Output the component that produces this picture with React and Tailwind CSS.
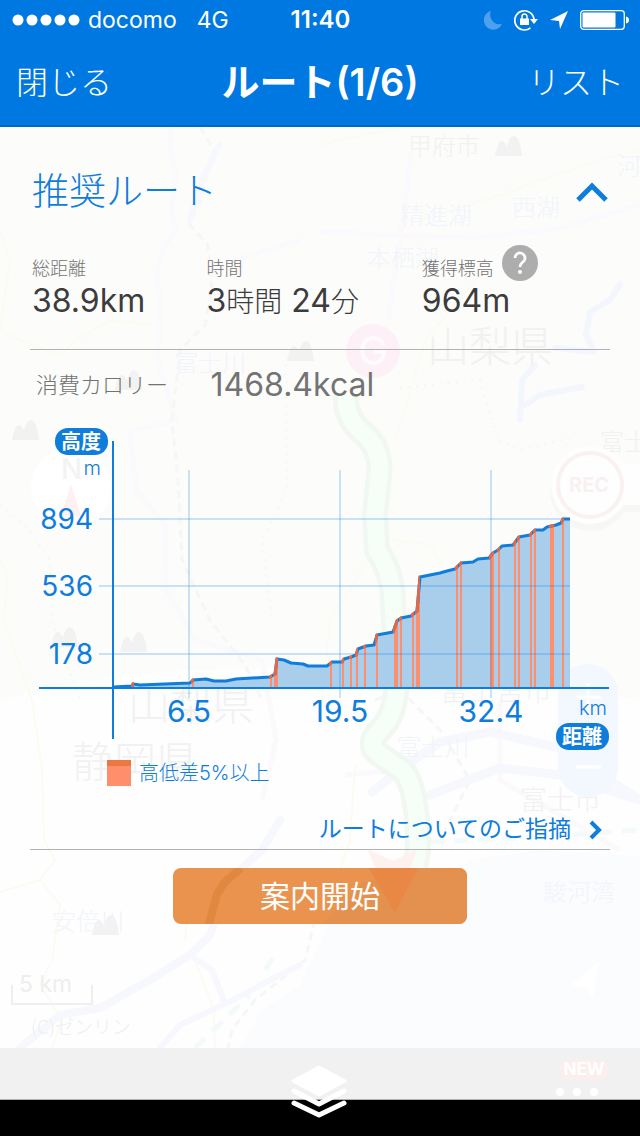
import React from "react";

// Elevation profile, [x, height] measured from the crossing of the axes
const PROFILE = [
  [0, 1], [19, 2], [20, 4], [27, 3], [52, 4], [77, 5], [80, 8], [93, 9],
  [101, 7], [113, 7], [123, 9], [157, 11], [162, 14], [164, 29], [171, 28],
  [178, 25], [190, 24], [195, 22], [214, 22], [219, 26], [229, 26], [231, 29],
  [238, 31], [243, 33], [245, 39], [253, 42], [261, 43], [264, 53], [280, 56],
  [284, 67], [288, 70], [298, 72], [304, 77], [307, 111], [327, 115],
  [334, 117], [342, 119], [348, 125], [360, 126], [365, 129], [376, 130],
  [380, 135], [385, 138], [389, 142], [400, 143], [406, 151], [417, 153],
  [422, 158], [430, 158], [434, 161], [443, 163], [448, 165], [450, 169],
  [457, 169],
];

// Steep parts of the route, [start, width]
const STEEP = [
  [19, 2], [79, 2], [157, 2], [161, 4], [217, 2], [229, 2], [237, 2],
  [243, 2], [251, 2], [263, 2], [281, 4], [287, 2], [299, 2], [303, 4],
  [343, 2], [347, 2], [377, 4], [385, 2], [401, 2], [405, 2], [417, 2],
  [421, 2], [437, 4], [449, 2],
];

const Y_TICKS = [
  { label: "894", y: -169 },
  { label: "536", y: -102 },
  { label: "178", y: -34 },
];

const X_TICKS = [
  { label: "6.5", x: 76 },
  { label: "19.5", x: 227 },
  { label: "32.4", x: 378 },
];

const linePath = "M" + PROFILE.map(([x, h]) => `${x} ${-h}`).join("L");

// --- Map behind the panel ---

const Peak = ({ x, y }) => (
  <path
    transform={`translate(${x} ${y})`}
    d="M0 20C2 10 4 5 7 5C10 5 11 10 12 10C14 4 16 0 19 0C23 0 26 9 27 20Z"
    fill="#f2f2f2"
  />
);

const MapBackdrop = () => (
  <svg
    className="absolute inset-0 h-full w-full"
    viewBox="0 127 640 921"
    preserveAspectRatio="xMidYMin slice"
    fill="none"
    aria-hidden="true"
  >
    <path d="M0 127H640V1048H0Z" fill="#fcfcfb" />
    <path d="M0 700Q160 660 330 670T640 700V1048H0Z" fill="#fefefe" />
    <path
      d="M240 1048L262 1010L300 985L328 925L400 912L470 860L540 850L640 856V1048Z"
      fill="#fbfcfe"
    />

    {/* Roads */}
    <g stroke="#fcf9fc" strokeWidth="5">
      <path d="M172 127Q168 150 176 175Q168 210 176 230Q150 260 160 300L158 360L176 420L130 432L136 490L165 525L166 590L196 640L262 660L276 740L262 800" />
      <path d="M230 262L300 240M320 232L390 235L480 238L560 228L640 205M412 150L400 240L388 320" />
      <path d="M345 775L400 770M500 700L500 780L620 850" />
    </g>
    <g stroke="#fbfbf2" strokeWidth="2">
      <path d="M0 230L10 260L0 330L30 345L60 355L76 340L112 320L150 325M320 145L340 140L400 127M420 220L500 195L600 160L640 150" />
      <path d="M485 270L425 340L405 410L395 440M0 560L8 575L4 620L32 700L42 770L44 840L55 860L40 880L0 892M40 880L60 905L52 960L40 985L62 1020L52 1048" />
      <path d="M395 540L430 545L450 580M365 565L330 620L322 700M355 765L350 840L330 900M190 880L185 940M195 960L214 1010L215 1048" />
    </g>
    <g stroke="#f6f6f5" strokeWidth="3" strokeDasharray="8 5">
      <path d="M200 127L214 150L200 200L190 225L208 245L212 290L205 325L180 350L172 420L178 480L182 560L210 620L245 665L262 700" />
      <path d="M375 700L400 690L440 730L470 780L445 830" />
      <path d="M315 920L305 960L255 1000L232 1030L228 1048" />
    </g>
    <g stroke="#f6f6f5" strokeWidth="2" strokeDasharray="2 6">
      <path d="M286 365L287 490L262 540L272 620M0 505L25 525L50 560L52 620L80 700M400 388L480 380L498 440L520 450L570 438" />
    </g>

    {/* Rivers and expressways */}
    <g stroke="#f6f8fd" strokeLinecap="round" strokeLinejoin="round">
      <path d="M219 145L200 185L190 220" strokeWidth="6" />
      <path
        d="M620 284L610 300L590 312L586 335L594 352L555 348M520 420L522 380L535 365M525 405L540 395L582 387"
        stroke="#f3f6fc"
        strokeWidth="6"
      />
      <path d="M372 792L400 770L440 742L490 732L560 748L640 800M430 795L500 768L560 775L640 800" strokeWidth="9" />
      <path d="M280 820L262 850L240 870L220 905L210 935L190 955L150 980L100 1008L60 1015L20 1048" strokeWidth="8" />
      <path d="M190 955L212 970L225 1004L180 1025L160 1048M225 1004L280 975L300 965" strokeWidth="6" />
    </g>
    <g stroke="#f4faf9" strokeWidth="5" strokeDasharray="14 10">
      <path d="M195 1048L250 995M265 970L278 950M430 842L520 838L640 830" />
    </g>

    {/* Route */}
    <g strokeLinejoin="round">
      <path
        d="M346 395Q345 418 362 432Q382 448 379 475L375 515L377 550Q392 572 393 600L397 680Q396 715 380 730Q365 745 380 755L402 770Q418 785 418 850L412 885"
        stroke="#f1f7f1"
        strokeWidth="26"
      />
      <path
        d="M346 395Q345 418 362 432Q382 448 379 475L375 515L377 550Q392 572 393 600L397 680Q396 715 380 730Q365 745 380 755L402 770Q418 785 418 850L412 885"
        stroke="#f6fef8"
        strokeWidth="17"
      />
    </g>
    <path d="M367 849L393 861L417 849L396 912Z" fill="#fef2f1" />
    <circle cx="373" cy="351" r="27" fill="#fdf0f6" />

    <Peak x={495} y={136} />
    <Peak x={287} y={341} />
    <Peak x={115} y={370} />
    <Peak x={12} y={420} />
    <Peak x={51} y={627} />
    <Peak x={120} y={632} />
    <Peak x={92} y={915} />

    {/* Place names */}
    <g className="font-['Noto_Sans_CJK_JP',sans-serif] font-light" fontSize="24">
      <g fill="#f1f1f1">
        <text x="408" y="155">甲府市</text>
        <text x="427" y="362" fontSize="42">山梨県</text>
        <text x="600" y="451">富士宮</text>
        <text x="128" y="720" fontSize="42">山梨県</text>
        <text x="72" y="777" fontSize="42">静岡県</text>
        <text x="440" y="701" fontSize="28">富士宮市</text>
        <text x="520" y="810" fontSize="27">富士市</text>
      </g>
      <g fill="#f1f4fb">
        <text x="617" y="175">河口</text>
        <text x="400" y="224">精進湖</text>
        <text x="512" y="216">西湖</text>
        <text x="367" y="267">本栖湖</text>
        <text x="174" y="372">富士川</text>
        <text x="397" y="756">富士川</text>
        <text x="52" y="930">安倍川</text>
        <text x="543" y="901">駿河湾</text>
      </g>
      <text x="31" y="1034" fontSize="19" fill="#efefef">(C)ゼンリン</text>
    </g>

    {/* Map controls */}
    <circle cx="71" cy="487" r="40" fill="#fff" />
    <path d="M71 484L81 516H61Z" fill="#fff1f1" />
    <circle cx="590" cy="491" r="40" fill="#f7f7f6" />
    <path d="M600 464H640V512H600Z" fill="#f7f7f6" />
    <path d="M600 464H640V505H600Z" fill="#fefefe" />
    <circle cx="590" cy="485" r="39" fill="#fefefe" />
    <circle cx="590" cy="485" r="32" stroke="#faf1f1" strokeWidth="4" />
    <rect x="558" y="664" width="60" height="133" rx="30" fill="#f3f7fe" />
    <path d="M576 697H601M588 684V710M576 767H601" stroke="#fff" strokeWidth="3" />
    <path d="M571 985L599 962L593 998L586 988Z" fill="#fff" />
    <path d="M12 985V1004H92V985" stroke="#efefef" strokeWidth="2" />
    <g className="font-[Inter,sans-serif]">
      <text x="61" y="479" fontSize="28" fontWeight="500" fill="#f3f3f3">N</text>
      <text x="569" y="492" fontSize="20" fontWeight="700" fill="#f9f1f1">REC</text>
      <text x="358" y="365" fontSize="40" fontWeight="500" fill="#fffafc">G</text>
      <text x="19" y="992" fontSize="23" fill="#eeeeee">5 km</text>
    </g>
  </svg>
);

// --- Status bar and title ---

const StatusBar = () => (
  <div className="grid h-10 grid-cols-3 items-center pl-3 pr-[11px] text-[23px]">
    <div className="flex items-center gap-2 whitespace-nowrap">
      <svg
        className="shrink-0"
        width="68"
        height="12"
        viewBox="0 0 68 12"
        fill="currentColor"
        aria-hidden="true"
      >
        <circle cx="6" cy="6" r="5.5" />
        <circle cx="20" cy="6" r="5.5" />
        <circle cx="34" cy="6" r="5.5" />
        <circle cx="48" cy="6" r="5.5" />
        <circle cx="62" cy="6" r="5.5" />
      </svg>
      <span>docomo</span>
      <span className="ml-3">4G</span>
    </div>
    <div className="text-center text-[24px] font-semibold">11:40</div>
    <div className="flex items-center justify-end gap-3">
      <svg width="18" height="20" viewBox="0 0 18 20" fill="#4da1ee" aria-hidden="true">
        <path d="M7 1A9.500 9.500 0 1 0 18 14A9.500 9.500 0 0 1 7 1Z" />
      </svg>
      <svg width="24" height="22" viewBox="0 0 24 22" fill="none" aria-hidden="true">
        <path
          d="M16.500 18.800A9.600 9.600 0 1 1 20 11"
          stroke="currentColor"
          strokeWidth="1.700"
        />
        <path d="M16 10H24L20 15Z" fill="currentColor" />
        <path d="M6 9.500H15V16H6Z" fill="currentColor" />
        <path d="M8 10V7.500A2.500 2.500 0 0 1 13 7.500V10" stroke="currentColor" strokeWidth="1.500" />
      </svg>
      <svg width="18" height="20" viewBox="0 0 18 20" fill="currentColor" aria-hidden="true">
        <path d="M18 1L0 10L9 11L10 19Z" />
      </svg>
      <svg width="49" height="20" viewBox="0 0 49 20" fill="none" aria-hidden="true">
        <rect x="0.700" y="0.700" width="43.600" height="18.600" rx="3" stroke="currentColor" strokeWidth="1.300" />
        <rect x="2.500" y="2.500" width="33" height="15" rx="1" fill="currentColor" />
        <path d="M46 6.500Q49 7 49 10T46 13.500Z" fill="currentColor" />
      </svg>
    </div>
  </div>
);

const Stat = ({ label, children, extra }) => (
  <div>
    <dt className="flex h-9 items-end gap-2 text-[18px] leading-6 text-[#737373]">
      {label}
      {extra}
    </dt>
    <dd className="whitespace-nowrap text-[32px] leading-10 text-[#3c3c3e]">{children}</dd>
  </div>
);

// --- Elevation chart ---

const ElevationChart = () => (
  <svg
    className="block h-auto w-full"
    viewBox="-83 -268 580 370"
    fill="none"
    role="img"
    aria-label="高度と距離"
  >
    <defs>
      <clipPath id="area">
        <path d={`${linePath}V0H0Z`} />
      </clipPath>
      <clipPath id="steep">
        {STEEP.map(([x, w]) => (
          <rect key={x} x={x - 1} y="-200" width={w + 1} height="200" />
        ))}
      </clipPath>
    </defs>

    <path d={`${linePath}V0H0Z`} fill="#a9ceec" />
    <g clipPath="url(#area)" fill="#ff8f6c">
      {STEEP.map(([x, w]) => (
        <rect key={x} x={x} y="-200" width={w} height="200" />
      ))}
    </g>

    <g stroke="#0078dc" strokeOpacity="0.2" strokeWidth="2">
      {Y_TICKS.map((t) => (
        <path key={t.label} d={`M-14 ${t.y}H457`} />
      ))}
      {X_TICKS.map((t) => (
        <path key={t.label} d={`M${t.x} -218V10`} />
      ))}
    </g>

    <path d={linePath} stroke="#0f7ddc" strokeWidth="3" strokeLinejoin="round" />
    <path d={linePath} stroke="#e0694a" strokeWidth="3" clipPath="url(#steep)" />
    <path d="M-74 0H496M0 -247V51" stroke="#0f7ddc" strokeWidth="2" />

    <g fill="#0f7ddc" className="font-[Inter,sans-serif]">
      {Y_TICKS.map((t) => (
        <text key={t.label} x="-20" y={t.y + 10} fontSize="28" textAnchor="end">
          {t.label}
        </text>
      ))}
      {X_TICKS.map((t) => (
        <text key={t.label} x={t.x} y="34" fontSize="30" textAnchor="middle">
          {t.label}
        </text>
      ))}
      <g fontSize="20" fontWeight="300" textAnchor="end">
        <text x="-12" y="-213">m</text>
        <text x="494" y="27">km</text>
      </g>
    </g>

    <rect x="-58" y="-260" width="53" height="27" rx="13" fill="#0f7ddc" />
    <rect x="443" y="35" width="53" height="27" rx="13" fill="#0f7ddc" />
    <g
      className="font-['Noto_Sans_CJK_JP',sans-serif] font-bold"
      fill="#fff"
      fontSize="20"
      textAnchor="middle"
    >
      <text x="-32" y="-239">高度</text>
      <text x="469" y="56">距離</text>
    </g>

    <rect x="-6" y="72" width="24" height="26" fill="#ff8f6c" />
    <rect x="-6" y="72" width="24" height="6" fill="#ec7742" />
    <text
      x="26"
      y="92"
      fontSize="20"
      fill="#0f7ddc"
      className="font-[Inter,'Noto_Sans_CJK_JP',sans-serif] font-light"
    >
      高低差5%以上
    </text>
  </svg>
);

const HelpButton = () => (
  <button
    type="button"
    aria-label="獲得標高について"
    className="flex size-9 items-center justify-center rounded-full bg-[#adadad] text-white"
  >
    <svg width="16" height="24" viewBox="0 0 16 24" fill="none" aria-hidden="true">
      <path
        d="M3 7A5 5 0 1 1 12 10C10 12 8 12.500 8 16"
        stroke="currentColor"
        strokeWidth="2.700"
      />
      <circle cx="8" cy="21" r="2" fill="currentColor" />
    </svg>
  </button>
);

const TabBar = () => (
  <footer>
    <nav className="relative flex h-[52px] justify-end border-b border-[#b0b0b0] bg-[#f1f1f1] pr-8">
      <button
        type="button"
        aria-label="レイヤー"
        className="absolute left-1/2 top-[17px] -translate-x-1/2"
      >
        <svg width="58" height="54" viewBox="0 0 58 54" fill="none" aria-hidden="true">
          <g stroke="#fff" strokeLinejoin="round" strokeLinecap="round">
            <path d="M2 16L28 2L54 16L28 30Z" fill="#fff" strokeWidth="3" />
            <path d="M3 26L28 39L53 26" strokeWidth="5" />
            <path d="M3 38L28 50L53 38" strokeWidth="5" />
          </g>
        </svg>
      </button>
      <button type="button" aria-label="その他" className="flex w-[52px] flex-col gap-2 pt-3">
        <span className="flex h-5 w-12 items-center justify-center self-end rounded-lg bg-[#fdeeee] text-[17px] font-bold text-white">
          NEW
        </span>
        <span className="flex gap-[9px]">
          <span className="size-2 rounded-full bg-white" />
          <span className="size-2 rounded-full bg-white" />
          <span className="size-2 rounded-full bg-white" />
        </span>
      </button>
    </nav>
    <div className="h-9 bg-black" />
  </footer>
);

export default function App() {
  return (
    <div className="flex min-h-screen flex-col bg-white font-[Inter,'Noto_Sans_CJK_JP',sans-serif]">
      <header className="border-b-2 border-[#0069c8] bg-[#0078e1] text-white">
        <StatusBar />
        <div className="flex h-[85px] items-center justify-between px-4 text-[32px] font-light">
          <button type="button" className="flex-1 text-left">
            閉じる
          </button>
          <h1 className="text-[38px] font-semibold">ルート(1/6)</h1>
          <button type="button" className="flex-1 text-right">
            リスト
          </button>
        </div>
      </header>

      <main className="relative flex-1">
        <MapBackdrop />

        <div className="relative px-[30px]">
          <div className="flex h-[118px] items-center justify-between px-0.5 pt-3">
            <h2 className="text-[37px] font-light text-[#0f7ddc]">推奨ルート</h2>
            <button type="button" aria-label="閉じる">
              <svg width="32" height="20" viewBox="0 0 32 20" fill="none" aria-hidden="true">
                <path d="M2 18L16 4L30 18" stroke="#0f7ddc" strokeWidth="5" />
              </svg>
            </button>
          </div>

          <dl className="grid grid-cols-[30fr_37fr_32fr] border-b border-[#b2b2b2] px-0.5 pb-[27px] font-light">
            <Stat label="総距離">
              <span className="font-normal">38.9km</span>
            </Stat>
            <Stat label="時間">
              <span className="font-normal">3</span>
              <span className="text-[28px]">時間</span>
              <span className="font-normal"> 24</span>
              <span className="text-[28px]">分</span>
            </Stat>
            <Stat label="獲得標高" extra={<HelpButton />}>
              <span className="font-normal">964m</span>
            </Stat>
          </dl>

          <dl className="grid h-[70px] grid-cols-[30fr_69fr] items-center px-0.5 text-[#737373]">
            <dt className="whitespace-nowrap px-1 text-[22px] font-light">消費カロリー</dt>
            <dd className="px-1 text-[32px]">1468.4kcal</dd>
          </dl>

          <ElevationChart />

          <div className="flex h-[60px] items-center justify-end border-b border-[#b2b2b2] pr-2 pt-5">
            <a href="#" className="flex items-center gap-[18px] text-[23px] text-[#0f7ddc]">
              ルートについてのご指摘
              <svg width="13" height="20" viewBox="0 0 13 20" fill="none" aria-hidden="true">
                <path d="M2 2L10 10L2 18" stroke="currentColor" strokeWidth="4" />
              </svg>
            </a>
          </div>

          <button
            type="button"
            className="relative mx-auto mt-[18px] flex h-14 w-[294px] items-center justify-center overflow-hidden rounded-lg bg-[#ea934e] text-[30px] text-white"
          >
            <svg
              className="absolute inset-0 h-full w-full"
              viewBox="0 0 294 56"
              fill="none"
              aria-hidden="true"
            >
              <path d="M68 0L52 14L44 26L36 56" stroke="#e0883f" strokeWidth="8" />
              <path d="M150 56L190 14L250 0H294V56Z" fill="#e4914f" />
              <path d="M196 0H245L222 45Z" fill="#e98745" />
            </svg>
            <span className="relative">案内開始</span>
          </button>
        </div>
      </main>

      <TabBar />
    </div>
  );
}
